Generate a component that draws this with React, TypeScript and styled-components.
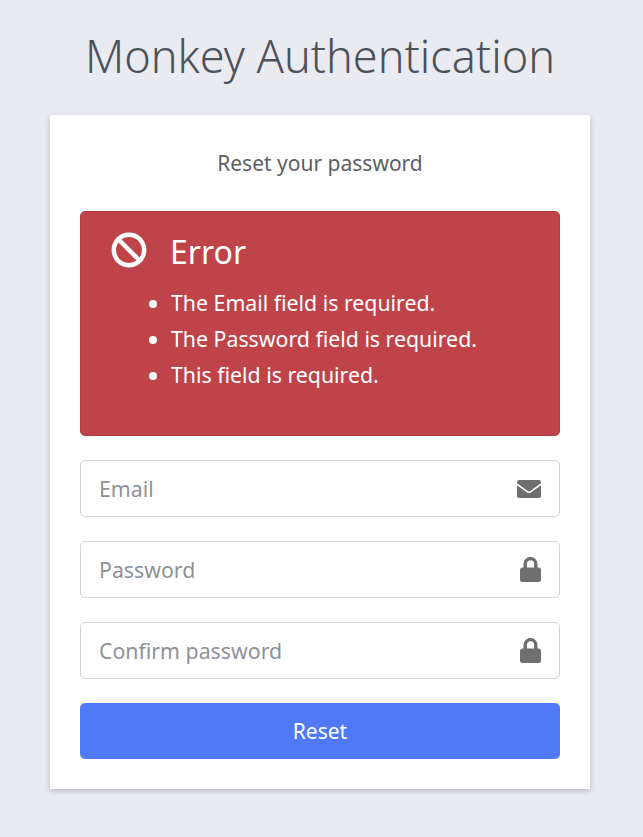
import React from 'react';
import styled, { createGlobalStyle } from 'styled-components';
import { FaBan } from 'react-icons/fa';

const ERRORS = [
  'The Email field is required.',
  'The Password field is required.',
  'This field is required.',
];

const EnvelopeIcon = () => (
  <svg width="24" height="18" viewBox="0 0 24 18">
    <rect width="24" height="18" rx="2.5" fill="currentColor" />
    <path d="M0 4.2 L10.6 11.8 Q12 12.8 13.4 11.8 L24 4.2" fill="none" stroke="#fff" strokeWidth="1.6" />
  </svg>
);

const LockIcon = () => (
  <svg width="21" height="25" viewBox="0 0 21 25">
    <path d="M5.2 12 V6.9 a5.3 5.3 0 0 1 10.6 0 V12" fill="none" stroke="currentColor" strokeWidth="3.4" />
    <rect y="10.5" width="21" height="14.5" rx="2.5" fill="currentColor" />
  </svg>
);

const FIELDS = [
  { placeholder: 'Email', type: 'email', icon: <EnvelopeIcon /> },
  { placeholder: 'Password', type: 'password', icon: <LockIcon /> },
  { placeholder: 'Confirm password', type: 'password', icon: <LockIcon /> },
];

const App = () => (
  <>
    <GlobalStyle />
    <Page>
      <Title>Monkey Authentication</Title>
      <Card>
        <Subtitle>Reset your password</Subtitle>
        <Alert>
          <AlertHeader>
            <FaBan size={36} />
            <AlertTitle>Error</AlertTitle>
          </AlertHeader>
          <AlertList>
            {ERRORS.map((error) => <li key={error}>{error}</li>)}
          </AlertList>
        </Alert>
        <Form>
          {FIELDS.map((field) => (
            <Field key={field.placeholder}>
              <Input type={field.type} placeholder={field.placeholder} />
              <FieldIcon>{field.icon}</FieldIcon>
            </Field>
          ))}
          <ResetButton type="button">Reset</ResetButton>
        </Form>
      </Card>
    </Page>
  </>
);

const GlobalStyle = createGlobalStyle`
  html, body {
    margin: 0;
    background: #e9ebf0;
  }

  * {
    box-sizing: border-box;
  }
`;

const FONT = `"Noto Sans", "Open Sans", sans-serif`;

const Page = styled.div`
  align-items: center;
  color: #53565c;
  display: flex;
  flex-direction: column;
  font-family: ${FONT};
  height: 837px;
  padding-top: 24px;
  width: 640px;
`;

const Title = styled.h1`
  color: #4d5159;
  font-size: 45px;
  font-weight: 300;
  line-height: 64px;
  margin: 0 0 27px;
`;

const Card = styled.main`
  background: #fff;
  box-shadow: 0 2px 5px rgba(0, 0, 0, 0.22);
  padding: 30px;
  width: 540px;
`;

const Subtitle = styled.p`
  color: #5f5f5f;
  font-size: 21px;
  line-height: 36px;
  margin: 0 0 30px;
  text-align: center;
`;

const Alert = styled.section`
  background: #bf444a;
  border: 1px solid #b33c42;
  border-radius: 5px;
  color: #fff;
  height: 225px;
  margin-bottom: 24px;
  padding: 18px 30px;
`;

const AlertHeader = styled.div`
  align-items: center;
  display: flex;
  gap: 23px;
  height: 40px;
`;

const AlertTitle = styled.h2`
  font-size: 32px;
  font-weight: 400;
  line-height: 40px;
  margin: 0;
  padding-top: 4px;
`;

const AlertList = styled.ul`
  font-size: 21.3px;
  line-height: 36px;
  margin: 15px 0 0;
  padding-left: 60px;
`;

const Form = styled.form`
  display: flex;
  flex-direction: column;
  gap: 24px;
`;

const Field = styled.div`
  position: relative;
`;

const Input = styled.input`
  background: #fff;
  border: 1px solid #d3d3d6;
  border-radius: 5px;
  display: block;
  font-family: ${FONT};
  font-size: 21.3px;
  height: 57px;
  padding: 0 60px 0 18px;
  width: 100%;

  &::placeholder {
    color: #8e9296;
    opacity: 1;
  }
`;

const FieldIcon = styled.span`
  align-items: center;
  color: #6f6f72;
  display: flex;
  height: 100%;
  position: absolute;
  right: 19px;
  top: 0;
`;

const ResetButton = styled.button`
  background: #5079f7;
  border: 0;
  border-radius: 5px;
  color: #fff;
  font-family: ${FONT};
  font-size: 21px;
  height: 56px;
`;

export default App;
